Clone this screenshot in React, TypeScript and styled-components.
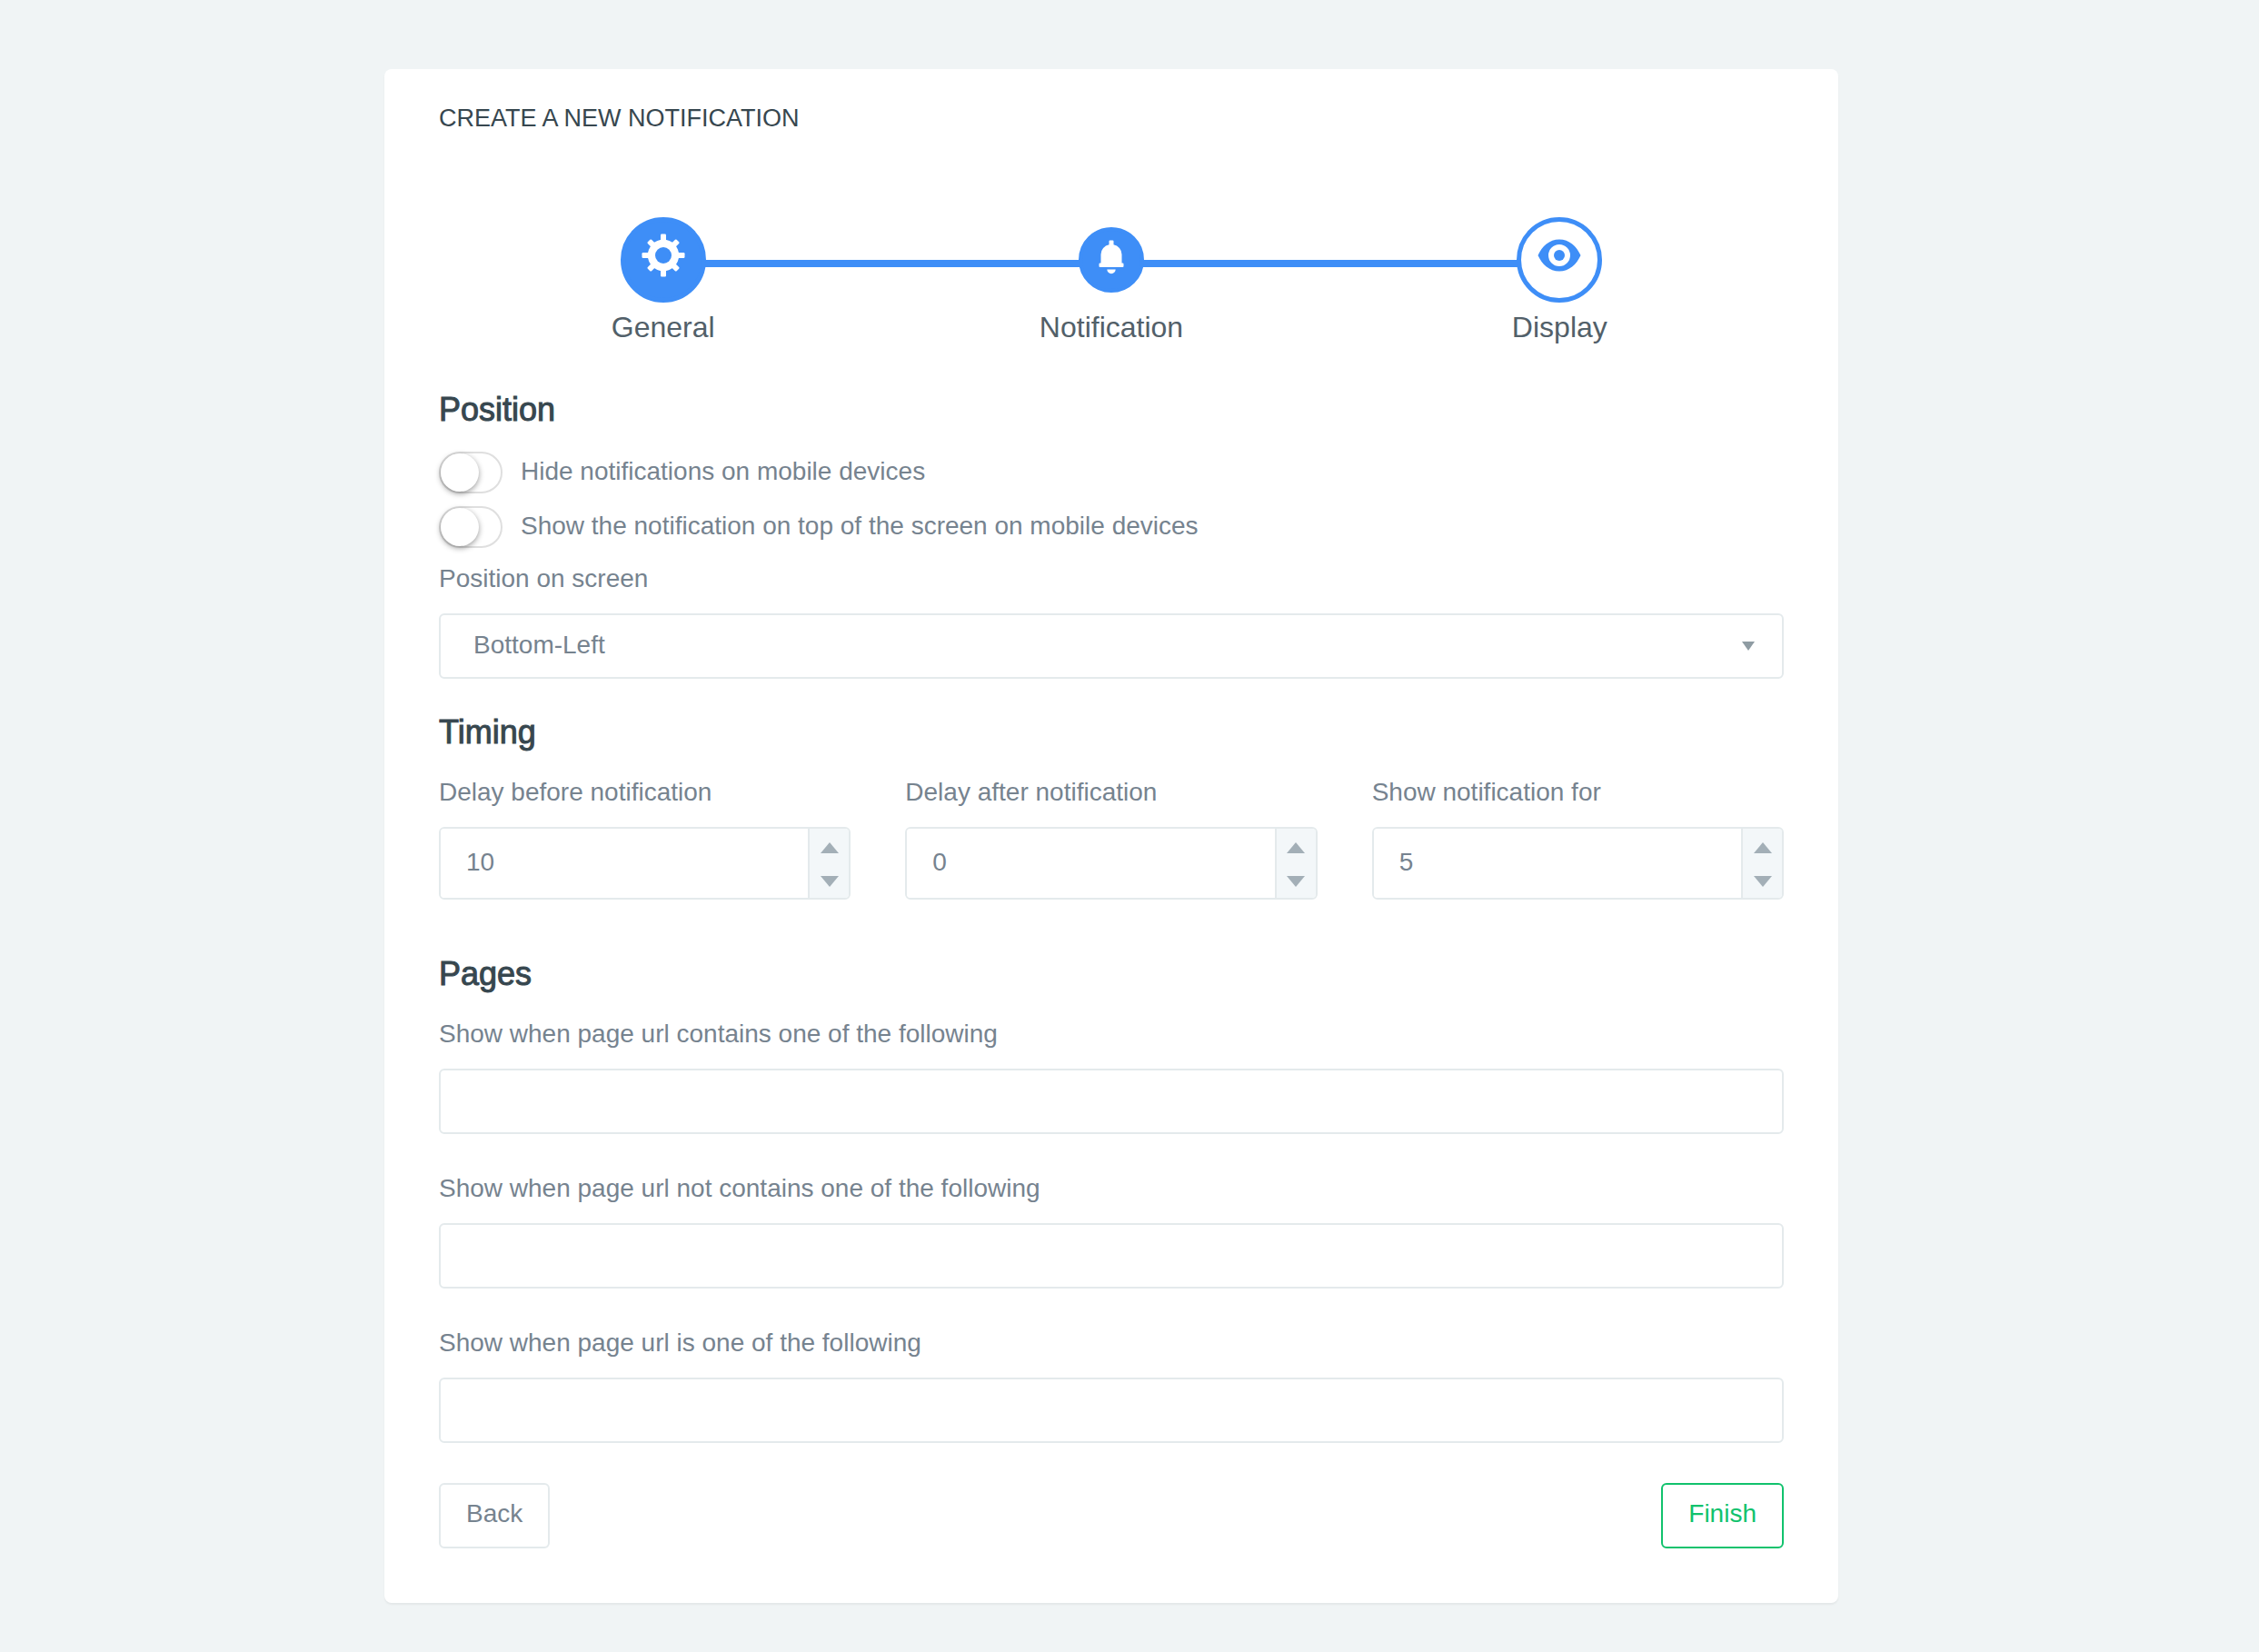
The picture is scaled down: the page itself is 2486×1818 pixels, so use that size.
import React, { useState } from "react";
import styled, { createGlobalStyle } from "styled-components";

const color = {
  page: "#f0f4f5",
  card: "#ffffff",
  primary: "#3e8ef7",
  success: "#11c26d",
  border: "#e4eaec",
  addon: "#f3f7f9",
  heading: "#37474f",
  step: "#526069",
  text: "#76838f",
  arrow: "#a3afb7",
};

const GlobalStyle = createGlobalStyle`
  *, *::before, *::after { box-sizing: border-box; }
  body {
    margin: 0;
    background: ${color.page};
    color: ${color.text};
    font-family: "Liberation Sans", Arial, sans-serif;
    font-size: 28px;
    line-height: 44px;
  }
`;

const Page = styled.main`
  padding: 76px 60px 54px 20px;
`;

const Card = styled.form`
  max-width: 1600px;
  margin: 0 auto;
  padding: 32px 60px 60px;
  background: ${color.card};
  border-radius: 8px;
  box-shadow: 0 2px 2px rgba(0, 0, 0, 0.05);
`;

const Title = styled.h1`
  margin: 0 0 87px;
  color: ${color.heading};
  font-size: 27px;
  font-weight: 400;
  line-height: 44px;
  text-transform: uppercase;
`;

const Steps = styled.ol`
  display: grid;
  grid-template-columns: repeat(3, minmax(0, 1fr));
  margin: 0 0 43px;
  padding: 0;
  list-style: none;
`;

const Step = styled.li`
  color: ${color.step};
  font-size: 32px;
  line-height: 54px;
  text-align: center;
`;

const StepTrack = styled.div`
  display: flex;
  align-items: center;
  height: 94px;
`;

const Connector = styled.span<{ $visible: boolean }>`
  flex: 1;
  height: 8px;
  margin: 8px -2px 0;
  background: ${(p) => (p.$visible ? color.primary : "transparent")};
`;

const StepIcon = styled.span<{ $size: number; $current?: boolean }>`
  position: relative;
  display: flex;
  align-items: center;
  justify-content: center;
  width: ${(p) => p.$size}px;
  height: ${(p) => p.$size}px;
  padding-bottom: ${(p) => (p.$size > 80 ? 11 : 7)}px;
  border: ${(p) => (p.$size > 80 ? 5 : 4)}px solid ${color.primary};
  border-radius: 50%;
  background: ${(p) => (p.$current ? color.card : color.primary)};
  color: ${(p) => (p.$current ? color.primary : color.card)};
`;

const Section = styled.section<{ $gap?: number }>`
  margin-bottom: ${(p) => p.$gap ?? 38}px;
`;

const SectionTitle = styled.h2`
  margin: 0 0 23px;
  color: ${color.heading};
  font-size: 36px;
  font-weight: 400;
  line-height: 42px;
  -webkit-text-stroke: 1px ${color.heading};
`;

const SwitchRow = styled.div`
  display: flex;
  gap: 20px;
  padding: 2px 0 12px;
  label { height: 46px; }
`;

const Switch = styled.input`
  appearance: none;
  flex: none;
  width: 70px;
  height: 46px;
  margin: 0;
  border: 2px solid #dfdfdf;
  border-radius: 23px;
  background: ${color.card};
  cursor: pointer;

  &::before {
    content: "";
    display: block;
    width: 42px;
    height: 42px;
    border-radius: 50%;
    background: ${color.card};
    box-shadow: 0 2px 6px rgba(0, 0, 0, 0.4);
  }
  &:checked {
    border-color: ${color.primary};
    background: ${color.primary};
  }
  &:checked::before { margin-left: 24px; }
`;

const Fields = styled.div`
  display: flex;
  flex-direction: column;
  gap: 38px;
`;

const Columns = styled.div`
  display: grid;
  grid-template-columns: repeat(3, minmax(0, 1fr));
  gap: 60px;
`;

const Field = styled.div`
  display: flex;
  flex-direction: column;
  gap: 16px;
`;

const SelectWrap = styled.div`
  position: relative;
  display: flex;
`;

const Select = styled.select`
  appearance: none;
  width: 100%;
  height: 72px;
  padding: 0 60px 3px 36px;
  border: 2px solid ${color.border};
  border-radius: 6px;
  background: ${color.card};
  color: ${color.text};
  font: inherit;
`;

const SelectArrow = styled.svg`
  position: absolute;
  top: 31px;
  right: 32px;
  fill: #8f9ca3;
  pointer-events: none;
`;

const TextInput = styled.input`
  width: 100%;
  height: 72px;
  padding: 0 28px 3px;
  border: 2px solid ${color.border};
  border-radius: 6px;
  background: ${color.card};
  color: ${color.text};
  font: inherit;
`;

const Spinner = styled.div`
  display: flex;
  height: 80px;
  overflow: hidden;
  border: 2px solid ${color.border};
  border-radius: 6px;
`;

const SpinnerInput = styled.input`
  appearance: textfield;
  flex: 1;
  width: 100%;
  min-width: 0;
  padding: 0 28px 3px;
  border: 0;
  background: ${color.card};
  color: ${color.text};
  font: inherit;

  &::-webkit-inner-spin-button { appearance: none; margin: 0; }
`;

const SpinnerButtons = styled.div`
  display: flex;
  flex: none;
  flex-direction: column;
  width: 45px;
  padding-top: 2px;
  border-left: 2px solid ${color.border};
  background: ${color.addon};
`;

const SpinnerButton = styled.button`
  display: flex;
  flex: 1;
  align-items: center;
  justify-content: center;
  padding: 0;
  border: 0;
  background: transparent;
  cursor: pointer;

  svg { fill: ${color.arrow}; }
`;

const Actions = styled.div`
  display: flex;
  justify-content: space-between;
`;

const Button = styled.button<{ $success?: boolean }>`
  height: 72px;
  padding: 0 28px 4px;
  border: 2px solid ${(p) => (p.$success ? color.success : color.border)};
  border-radius: 6px;
  background: transparent;
  color: ${(p) => (p.$success ? color.success : color.text)};
  font: inherit;
  cursor: pointer;
`;

const GearIcon = () => (
  <svg width="48" height="48" viewBox="0 0 48 48" aria-hidden="true">
    <g fill="currentColor">
      {[0, 45, 90, 135].map((a) => (
        <rect
          key={a}
          x="21"
          y={a % 90 ? 1.5 : 0.5}
          width="6"
          height={a % 90 ? 45 : 47}
          rx="1.2"
          transform={`rotate(${a} 24 24)`}
        />
      ))}
      <circle cx="24" cy="24" r="17.200" />
    </g>
    <circle cx="24" cy="24" r="9" fill={color.primary} />
  </svg>
);

const BellIcon = () => (
  <svg width="28" height="38" viewBox="0 0 28 38" aria-hidden="true">
    <path
      fill="currentColor"
      d="M11.500 1.500a1 1 0 0 1 1-1h3a1 1 0 0 1 1 1V5.300A11 11 0 0 1 25.500 16V25.500H26.500a1 1 0 0 1 1 1V29a1 1 0 0 1-1 1H1.500a1 1 0 0 1-1-1V26.500a1 1 0 0 1 1-1H2.500V16A11 11 0 0 1 11.500 5.300ZM9.300 32.500H18.700A4.700 4.700 0 0 1 9.300 32.500Z"
    />
  </svg>
);

const EyeIcon = () => (
  <svg width="48" height="36" viewBox="0 0 48 36" aria-hidden="true">
    <path
      fill="currentColor"
      fillRule="evenodd"
      d="M.5 18C5 8 13 .5 24 .5S43 8 47.500 18C43 28 35 35.500 24 35.500S5 28 .5 18ZM24 6a12 12 0 1 0 0 24a12 12 0 1 0 0-24Z"
    />
    <circle cx="24" cy="18" r="6" fill="currentColor" />
  </svg>
);

const steps = [
  { label: "General", icon: <GearIcon />, size: 94 },
  { label: "Notification", icon: <BellIcon />, size: 72 },
  { label: "Display", icon: <EyeIcon />, size: 94 },
];

function NumberField({ id, label, initial }: { id: string; label: string; initial: number }) {
  const [value, setValue] = useState(initial);
  return (
    <Field>
      <label htmlFor={id}>{label}</label>
      <Spinner>
        <SpinnerInput
          id={id}
          type="number"
          value={value}
          onChange={(e) => setValue(Number(e.target.value))}
        />
        <SpinnerButtons>
          <SpinnerButton type="button" aria-label="Increase" onClick={() => setValue(value + 1)}>
            <svg width="20" height="12" viewBox="0 0 20 12"><path d="M10 0 20 12H0Z" /></svg>
          </SpinnerButton>
          <SpinnerButton type="button" aria-label="Decrease" onClick={() => setValue(value - 1)}>
            <svg width="20" height="12" viewBox="0 0 20 12"><path d="M0 0H20L10 12Z" /></svg>
          </SpinnerButton>
        </SpinnerButtons>
      </Spinner>
    </Field>
  );
}

function UrlField({ id, label }: { id: string; label: string }) {
  return (
    <Field>
      <label htmlFor={id}>{label}</label>
      <TextInput id={id} type="text" />
    </Field>
  );
}

export default function App() {
  return (
    <Page>
      <GlobalStyle />
      <Card onSubmit={(e) => e.preventDefault()}>
        <Title>Create a new notification</Title>

        <Steps>
          {steps.map((step, i) => {
            const last = i === steps.length - 1;
            return (
              <Step key={step.label} aria-current={last ? "step" : undefined}>
                <StepTrack>
                  <Connector $visible={i > 0} />
                  <StepIcon $size={step.size} $current={last}>{step.icon}</StepIcon>
                  <Connector $visible={!last} />
                </StepTrack>
                {step.label}
              </Step>
            );
          })}
        </Steps>

        <Section>
          <SectionTitle>Position</SectionTitle>
          <SwitchRow>
            <Switch id="hide-mobile" type="checkbox" />
            <label htmlFor="hide-mobile">Hide notifications on mobile devices</label>
          </SwitchRow>
          <SwitchRow>
            <Switch id="top-mobile" type="checkbox" />
            <label htmlFor="top-mobile">
              Show the notification on top of the screen on mobile devices
            </label>
          </SwitchRow>
          <Field>
            <label htmlFor="position">Position on screen</label>
            <SelectWrap>
              <Select id="position" defaultValue="Bottom-Left">
                <option>Bottom-Left</option>
              </Select>
              <SelectArrow width="14" height="10" viewBox="0 0 14 10">
                <path d="M0 0H14L7 10Z" />
              </SelectArrow>
            </SelectWrap>
          </Field>
        </Section>

        <Section $gap={61}>
          <SectionTitle>Timing</SectionTitle>
          <Columns>
            <NumberField id="delay-before" label="Delay before notification" initial={10} />
            <NumberField id="delay-after" label="Delay after notification" initial={0} />
            <NumberField id="show-for" label="Show notification for" initial={5} />
          </Columns>
        </Section>

        <Section $gap={44}>
          <SectionTitle>Pages</SectionTitle>
          <Fields>
            <UrlField id="url-contains" label="Show when page url contains one of the following" />
            <UrlField id="url-excludes" label="Show when page url not contains one of the following" />
            <UrlField id="url-is" label="Show when page url is one of the following" />
          </Fields>
        </Section>

        <Actions>
          <Button type="button">Back</Button>
          <Button type="submit" $success>Finish</Button>
        </Actions>
      </Card>
    </Page>
  );
}
